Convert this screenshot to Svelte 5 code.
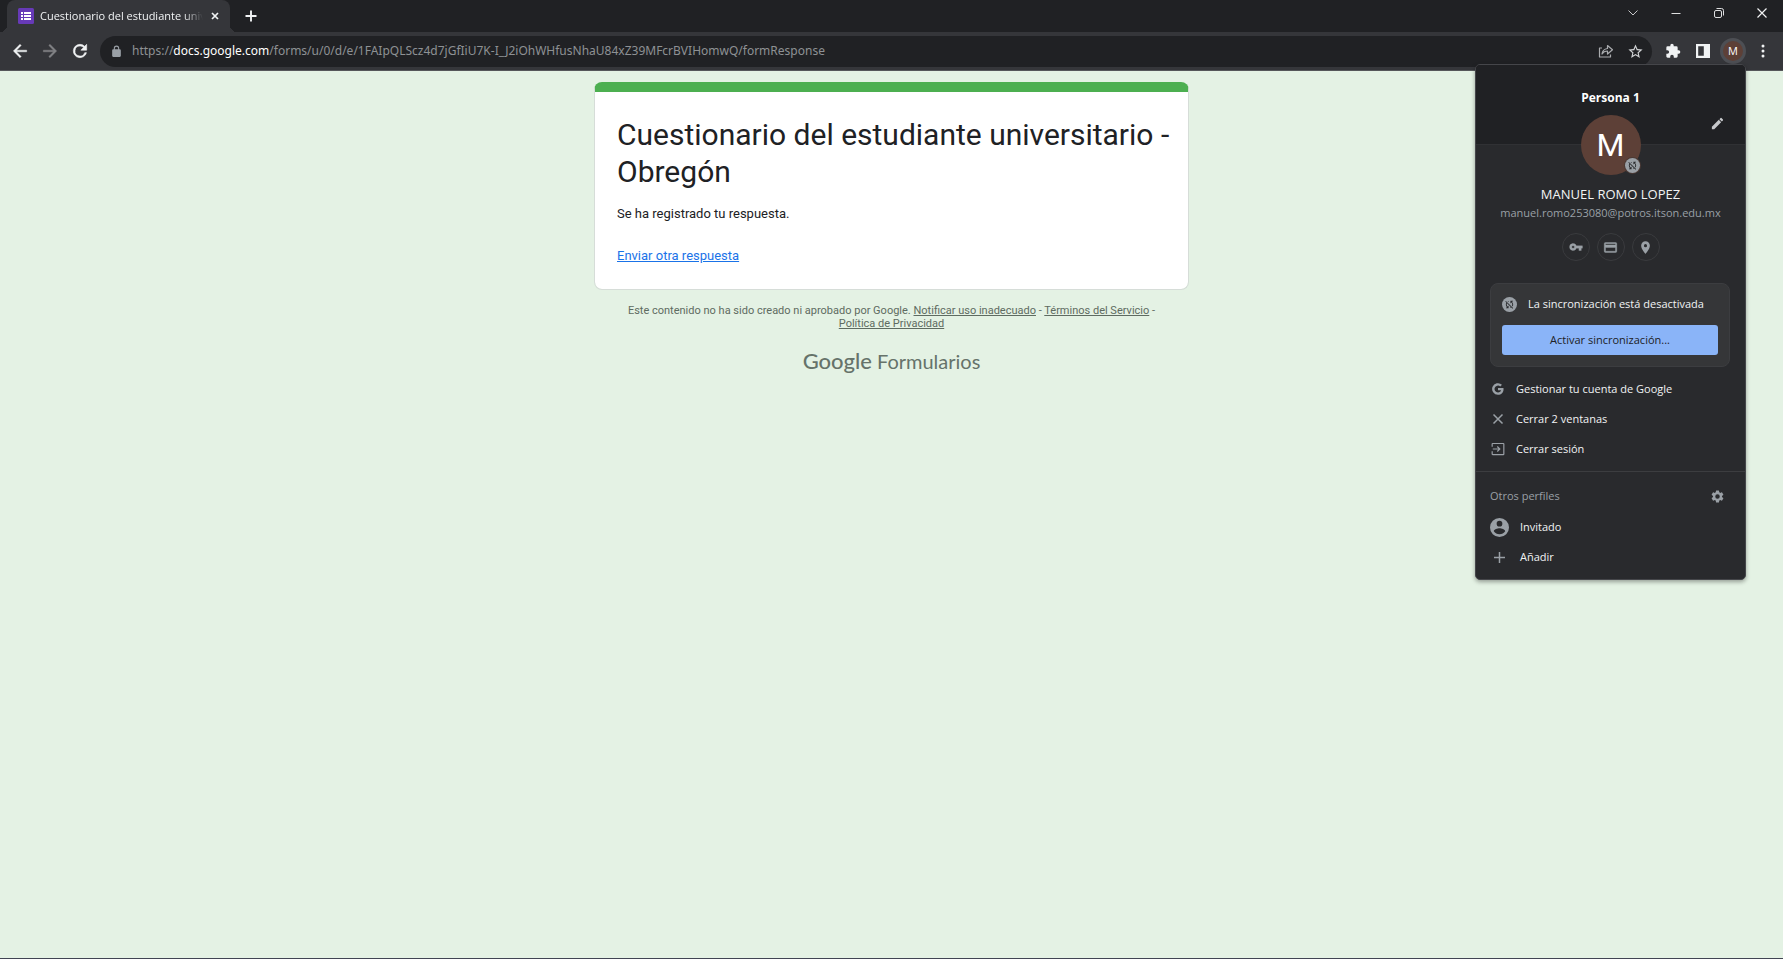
<script>
  const origin = 'docs.google.com';
  const path = '/forms/u/0/d/e/1FAIpQLScz4d7jGfIiU7K-I_J2iOhWHfusNhaU84xZ39MFcrBVIHomwQ/formResponse';
  let editing = $state(false);
  let address = $state('');

  function startEditing() {
    address = `https://${origin}${path}`;
    editing = true;
  }
  function stopEditing() {
    address = '';
    editing = false;
  }
</script>

{#snippet syncOff()}
  <svg viewBox="0 0 24 24" width="11" height="11" aria-hidden="true" fill="#292a2d">
    <path d="M10 6.350V4.260c-.8.210-1.550.540-2.230.960l1.460 1.460c.250-.120.500-.240.770-.330zm-7.140-.940l2.360 2.360C4.450 8.990 4 10.440 4 12c0 2.210.910 4.200 2.360 5.640L4 20h6v-6l-2.240 2.240C6.680 15.150 6 13.660 6 12c0-1 .250-1.940.680-2.770l8.080 8.080c-.250.130-.500.250-.770.340v2.090c.800-.210 1.550-.540 2.230-.960l2.360 2.360 1.270-1.270L4.140 4.140 2.860 5.410zM20 4h-6v6l2.240-2.240C17.320 8.850 18 10.340 18 12c0 1-.250 1.940-.680 2.770l1.460 1.460C19.550 15.010 20 13.560 20 12c0-2.210-.910-4.200-2.360-5.640L20 4z" />
  </svg>
{/snippet}

<div class="browser">
  <header>
    <div class="tabstrip">
      <div class="tab">
        <svg class="favicon" viewBox="0 0 16 16" width="16" height="16" aria-hidden="true">
          <rect width="16" height="16" rx="1.500" fill="#673ab7" />
          <path d="M3 4h2v2H3zM6 4h7v2H6zM3 7h2v2H3zM6 7h7v2H6zM3 10h2v2H3zM6 10h7v2H6z" fill="#fff" />
        </svg>
        <span class="tab-title">Cuestionario del estudiante universitario</span>
        <button class="icon" aria-label="Cerrar pestaña">
          <svg viewBox="0 0 16 16" width="16" height="16"><path d="M5 5l6 6M11 5l-6 6" stroke="#f1f3f4" stroke-width="1.700" /></svg>
        </button>
      </div>
      <button class="icon new-tab" aria-label="Nueva pestaña">
        <svg viewBox="0 0 16 16" width="16" height="16"><path d="M8 2.500v11M2.500 8h11" stroke="#f1f3f4" stroke-width="1.900" /></svg>
      </button>
      <div class="window-controls">
        <button class="icon" aria-label="Buscar pestañas">
          <svg viewBox="0 0 16 16" width="16" height="16" fill="none" stroke="#c8c9cb"><path d="M3.500 5.500L8 10l4.500-4.500" /></svg>
        </button>
        <button class="icon" aria-label="Minimizar">
          <svg viewBox="0 0 16 16" width="16" height="16" fill="none" stroke="#dedfe0"><path d="M3.500 8.500h9" /></svg>
        </button>
        <button class="icon" aria-label="Restaurar">
          <svg viewBox="0 0 16 16" width="16" height="16" fill="none" stroke="#dedfe0"><rect x="3.500" y="5.500" width="7" height="7" rx="1.500" /><path d="M5.500 3.500h5a2 2 0 0 1 2 2v5" /></svg>
        </button>
        <button class="icon" aria-label="Cerrar">
          <svg viewBox="0 0 16 16" width="16" height="16" fill="none" stroke="#f1f3f4" stroke-width="1.200"><path d="M3.500 3.500l9 9M12.500 3.500l-9 9" /></svg>
        </button>
      </div>
    </div>

    <div class="toolbar">
      <div class="navigation">
        <button class="icon" aria-label="Atrás">
          <svg viewBox="0 0 24 24" width="20" height="20" fill="#f1f3f4" stroke="#f1f3f4" stroke-width=".5"><path d="M20 11H7.830l5.590-5.590L12 4l-8 8 8 8 1.410-1.410L7.830 13H20z" /></svg>
        </button>
        <button class="icon" aria-label="Adelante" disabled>
          <svg viewBox="0 0 24 24" width="20" height="20" fill="#828386" stroke="#828386" stroke-width=".5"><path d="M4 11h12.170l-5.590-5.590L12 4l8 8-8 8-1.410-1.410L16.170 13H4z" /></svg>
        </button>
        <button class="icon" aria-label="Volver a cargar">
          <svg viewBox="0 0 24 24" width="20" height="20" fill="#f1f3f4" stroke="#f1f3f4" stroke-width=".7"><path d="M17.650 6.350A7.960 7.960 0 0 0 12 4a8 8 0 1 0 7.730 10h-2.080A6 6 0 1 1 12 6c1.660 0 3.140.690 4.220 1.780L13 11h7V4z" /></svg>
        </button>
      </div>
      <div class="omnibox">
        <svg class="lock" viewBox="0 0 24 24" width="13" height="13" fill="#9aa0a6" aria-hidden="true"><path d="M18 8h-1V6A5 5 0 0 0 7 6v2H6a2 2 0 0 0-2 2v10c0 1.100.900 2 2 2h12a2 2 0 0 0 2-2V10a2 2 0 0 0-2-2zM9 8V6a3 3 0 0 1 6 0v2z" /></svg>
        <div class="address">
          <input type="text" aria-label="Barra de direcciones" bind:value={address} onfocus={startEditing} onblur={stopEditing} />
          {#if !editing}
            <div class="url">https://<b>{origin}</b>{path}</div>
          {/if}
        </div>
        <button class="icon" aria-label="Compartir">
          <svg viewBox="0 0 16 16" width="16" height="16" fill="none" stroke="#a9abae" stroke-width="1.200" stroke-linejoin="round"><path d="M4 5H1.500v9h11v-2.500M9.500 5.500V2.500L14.500 6.700 9.500 11V8C7 8 5.300 8.800 4 11c.3-3 2-5 5.500-5.500z" /></svg>
        </button>
        <button class="icon" aria-label="Añadir a marcadores">
          <svg viewBox="0 0 24 24" width="17" height="17" fill="#d2d4d6"><path d="M22 9.240l-7.190-.620L12 2 9.190 8.630 2 9.240l5.460 4.730L5.820 21 12 17.270 18.180 21l-1.630-7.030zM12 15.400l-3.760 2.270 1-4.280-3.320-2.880 4.380-.380L12 6.100l1.710 4.040 4.380.380-3.320 2.880 1 4.280z" /></svg>
        </button>
      </div>
      <div class="actions">
        <button class="icon" aria-label="Extensiones">
          <svg viewBox="0 0 24 24" width="16" height="16" fill="#f1f3f4"><path d="M20.500 11H19V7a2 2 0 0 0-2-2h-4V3.500a2.500 2.500 0 0 0-5 0V5H4a2 2 0 0 0-2 2v3.800h1.500a2.700 2.700 0 0 1 0 5.400H2V20c0 1.100.900 2 2 2h3.800v-1.500a2.700 2.700 0 0 1 5.400 0V22H17a2 2 0 0 0 2-2v-4h1.500a2.500 2.500 0 0 0 0-5z" /></svg>
        </button>
        <button class="icon" aria-label="Panel lateral">
          <svg viewBox="0 0 16 16" width="16" height="16"><path d="M1 1h14v14H1zM3.200 3.200v9.600h5.600V3.200z" fill="#f1f3f4" fill-rule="evenodd" /></svg>
        </button>
        <button class="profile" aria-label="Persona 1">M</button>
        <button class="icon" aria-label="Menú">
          <svg viewBox="0 0 16 16" width="16" height="16" fill="#f1f3f4"><circle cx="8" cy="3" r="1.500" /><circle cx="8" cy="8" r="1.500" /><circle cx="8" cy="13" r="1.500" /></svg>
        </button>
      </div>
    </div>
  </header>

  <main>
    <section class="card">
      <h1>Cuestionario del estudiante universitario - Obregón</h1>
      <p>Se ha registrado tu respuesta.</p>
      <a href="#otra">Enviar otra respuesta</a>
    </section>
    <footer>
      <p class="legal">
        Este contenido no ha sido creado ni aprobado por Google. <a href="#uso">Notificar uso inadecuado</a> - <a href="#terminos">Términos del Servicio</a> - <a href="#privacidad">Política de Privacidad</a>
      </p>
      <a class="brand" href="#formularios"><b>Google</b> <span>Formularios</span></a>
    </footer>
  </main>

  <aside class="profile-menu" aria-label="Perfil">
    <div class="banner">
      <h2>Persona 1</h2>
      <button class="icon edit" aria-label="Personalizar perfil">
        <svg viewBox="0 0 24 24" width="15" height="15" fill="#c6c8cb"><path d="M3 17.250V21h3.750L17.810 9.940l-3.750-3.750zM20.710 7.040a1 1 0 0 0 0-1.410l-2.340-2.340a1 1 0 0 0-1.410 0l-1.830 1.830 3.750 3.750z" /></svg>
      </button>
    </div>
    <div class="identity">
      <div class="avatar">M<span class="badge sync">{@render syncOff()}</span></div>
      <strong>MANUEL ROMO LOPEZ</strong>
      <span class="email">manuel.romo253080@potros.itson.edu.mx</span>
      <div class="shortcuts">
        <button aria-label="Contraseñas">
          <svg viewBox="0 0 24 24" width="14" height="14" fill="#9aa0a6" stroke="#9aa0a6" stroke-width=".6"><path d="M12.650 10A6 6 0 0 0 1 12a6 6 0 0 0 11.650 2H17v4h4v-4h2v-4zM7 14.300a2.300 2.300 0 1 1 0-4.600 2.300 2.300 0 0 1 0 4.600z" /></svg>
        </button>
        <button aria-label="Métodos de pago">
          <svg viewBox="0 0 24 24" width="15" height="15" fill="#9aa0a6" stroke="#9aa0a6" stroke-width=".6"><path d="M20 4H4a2 2 0 0 0-2 2v12c0 1.100.900 2 2 2h16a2 2 0 0 0 2-2V6a2 2 0 0 0-2-2zm0 14H4v-6h16zm0-10H4V6h16z" /></svg>
        </button>
        <button aria-label="Direcciones">
          <svg viewBox="0 0 24 24" width="15" height="15" fill="#9aa0a6"><path d="M12 2a7 7 0 0 0-7 7c0 5.250 7 13 7 13s7-7.750 7-13a7 7 0 0 0-7-7zm0 9.500a2.500 2.500 0 1 1 0-5 2.500 2.500 0 0 1 0 5z" /></svg>
        </button>
      </div>
    </div>
    <div class="sync-card">
      <div class="sync-status"><span class="sync">{@render syncOff()}</span>La sincronización está desactivada</div>
      <button class="activate">Activar sincronización...</button>
    </div>
    <div class="menu-list">
      <button>
        <svg viewBox="0 0 24 24" width="14" height="14" fill="#9aa0a6"><path d="M21.300 10.200H12v4h5.300c-.600 2.200-2.600 3.700-5.300 3.700a5.900 5.900 0 1 1 3.900-10.300l2.900-2.900A10 10 0 1 0 12 22c5.600 0 9.500-4 9.500-9.700 0-.700-.100-1.400-.200-2.100z" /></svg>
        Gestionar tu cuenta de Google
      </button>
      <button>
        <svg viewBox="0 0 14 14" width="14" height="14" stroke="#9aa0a6" stroke-width="1.500"><path d="M2.500 2.500l9 9M11.500 2.500l-9 9" /></svg>
        Cerrar 2 ventanas
      </button>
      <button>
        <svg viewBox="0 0 24 24" width="14" height="14" fill="#9aa0a6"><path d="M10.090 15.590L11.500 17l5-5-5-5-1.410 1.410L12.670 11H3v2h9.670zM21 1.500H3a2 2 0 0 0-2 2V8h2V3.500h18v17H3V16H1v4.500c0 1.100.900 2 2 2h18a2 2 0 0 0 2-2v-17a2 2 0 0 0-2-2z" /></svg>
        Cerrar sesión
      </button>
    </div>
    <div class="others">
      <div class="others-title">
        <span>Otros perfiles</span>
        <button class="icon" aria-label="Gestionar perfiles">
          <svg viewBox="0 0 24 24" width="15" height="15" fill="#9aa0a6"><path d="M19.140 12.940a7 7 0 0 0 0-1.880l2.030-1.580a.5.5 0 0 0 .120-.610l-1.920-3.320a.5.5 0 0 0-.590-.220l-2.390.960a7 7 0 0 0-1.620-.940l-.360-2.540A.5.5 0 0 0 13.930 2.400h-3.840a.5.5 0 0 0-.480.410l-.360 2.540a7 7 0 0 0-1.620.940l-2.390-.960a.5.5 0 0 0-.590.220L2.740 8.870a.5.5 0 0 0 .120.610l2.030 1.580a7 7 0 0 0 0 1.880l-2.030 1.580a.5.5 0 0 0-.120.610l1.920 3.320c.120.220.370.290.590.220l2.390-.960c.5.380 1.030.700 1.620.940l.360 2.540c.050.240.240.410.480.410h3.840a.5.5 0 0 0 .470-.410l.360-2.540a7 7 0 0 0 1.620-.940l2.390.960c.220.080.470 0 .590-.220l1.920-3.320a.5.5 0 0 0-.120-.610zM12 15.600a3.600 3.600 0 1 1 0-7.200 3.600 3.600 0 0 1 0 7.200z" /></svg>
        </button>
      </div>
      <button>
        <svg viewBox="2 2 20 20" width="19" height="19" fill="#9aa0a6"><path d="M12 2a10 10 0 1 0 0 20 10 10 0 0 0 0-20zm0 3a3 3 0 1 1 0 6 3 3 0 0 1 0-6zm0 14.200a7.200 7.200 0 0 1-6-3.220c.030-1.990 4-3.080 6-3.080s5.970 1.090 6 3.080a7.200 7.200 0 0 1-6 3.220z" /></svg>
        Invitado
      </button>
      <button>
        <svg viewBox="0 0 19 19" width="19" height="19" stroke="#9aa0a6" stroke-width="1.500"><path d="M9.500 4v11M4 9.500h11" /></svg>
        Añadir
      </button>
    </div>
  </aside>
</div>

<style>
  :global(body) { margin: 0; background: #e4f2e4; }
  .browser {
    position: relative;
    box-sizing: border-box;
    min-height: 100vh;
    border-bottom: 1px solid #414553;
    background: #e4f2e4;
    font-family: "Open Sans", "Noto Sans", sans-serif;
    font-size: 11px;
    line-height: 16px;
    color: #f1f3f4;
  }
  button { font: inherit; color: inherit; background: none; border: 0; padding: 0; margin: 0; }
  svg { display: block; flex: none; }
  h1, h2, p { margin: 0; }
  .icon { display: grid; place-items: center; flex: none; }

  .tabstrip { display: flex; align-items: center; height: 32px; padding-left: 7px; background: #202124; }
  .tab {
    position: relative;
    display: flex;
    align-items: center;
    box-sizing: border-box;
    width: 223px;
    height: 32px;
    padding: 0 7px 0 11px;
    border-radius: 8px 8px 0 0;
    background: #35363a;
  }
  .tab::before, .tab::after {
    content: "";
    position: absolute;
    bottom: 0;
    width: 7px;
    height: 7px;
  }
  .tab::before { left: -7px; background: radial-gradient(circle at 0 0, #202124 7px, #35363a 7px); }
  .tab::after { right: -7px; background: radial-gradient(circle at 100% 0, #202124 7px, #35363a 7px); }
  .tab-title {
    flex: 1;
    min-width: 0;
    margin: 0 4px 0 6px;
    overflow: hidden;
    white-space: nowrap;
    mask-image: linear-gradient(to right, #000 88%, transparent);
  }
  .new-tab { margin-left: 13px; }
  .window-controls { display: flex; gap: 27px; margin-left: auto; padding: 0 13px 6px 0; }

  .toolbar {
    display: flex;
    align-items: center;
    height: 38px;
    gap: 10px;
    padding: 0 12px 0 10px;
    border-bottom: 1px solid #55575a;
    background: #35363a;
  }
  .navigation { display: flex; gap: 10px; }
  .omnibox {
    display: flex;
    flex: 1;
    align-items: center;
    min-width: 0;
    height: 31px;
    box-sizing: border-box;
    padding: 0 8px 0 10px;
    border-radius: 16px;
    background: #202124;
  }
  .address { position: relative; flex: 1; min-width: 0; margin: 0 12px 0 9px; font-family: "Noto Sans", sans-serif; font-size: 12px; line-height: 20px; }
  .address input {
    display: block;
    width: 100%;
    height: 20px;
    padding: 0;
    border: 0;
    outline: 0;
    background: none;
    color: #e8eaed;
    font: inherit;
  }
  .url { position: absolute; inset: 0; overflow: hidden; white-space: nowrap; pointer-events: none; color: #8e9194; }
  .url b { font-weight: 400; color: #fff; }
  .omnibox .icon + .icon { margin-left: 13px; }
  .actions { display: flex; align-items: center; gap: 9px; margin-left: 2px; }
  .actions .icon { width: 17px; height: 17px; }
  .actions .icon:first-child { margin-right: 4px; }
  .profile {
    width: 26px;
    height: 26px;
    border: 3px solid #4d4f54;
    border-radius: 50%;
    background: #5d4037;
    font-size: 11px;
    line-height: 20px;
    color: #fff;
  }
  .actions .profile + .icon { margin-left: -1px; }

  main { padding: 11px 0 24px; font-family: Roboto, sans-serif; }
  .card {
    box-sizing: border-box;
    max-width: 595px;
    margin: 0 auto;
    padding: 24px 12px 24px 22px;
    border: 1px solid #d6ddd8;
    border-top: 10px solid #4caf50;
    border-radius: 8px;
    background: linear-gradient(#fff, #fff) padding-box;
    color: #202124;
    font-size: 13px;
    line-height: 18px;
  }
  h1 { font-size: 30px; line-height: 37px; font-weight: 400; }
  .card p { margin: 15px 0 24px; }
  .card a { color: #1a73e8; }
  footer { display: flex; flex-direction: column; align-items: center; color: #5e6b61; }
  .legal { max-width: 550px; margin-top: 14px; text-align: center; font-size: 11px; line-height: 13px; }
  .legal a { color: inherit; }
  .brand {
    display: flex;
    align-items: baseline;
    gap: 5px;
    margin-top: 17px;
    color: #66736a;
    font-family: Lato, sans-serif;
    font-size: 20px;
    line-height: 28px;
    text-decoration: none;
  }
  .brand b { font-size: 22px; font-weight: 500; }

  .profile-menu {
    position: absolute;
    top: 64px;
    right: 37px;
    box-sizing: border-box;
    width: 271px;
    padding-bottom: 7px;
    overflow: hidden;
    border: 1px solid #45464a;
    border-radius: 5px;
    background: #292a2d;
    box-shadow: 0 2px 4px rgb(0 0 0 / 35%);
  }
  .banner { position: relative; height: 79px; background: #202124; border-bottom: 1px solid #303134; }
  h2 { padding-top: 25px; text-align: center; font-size: 12px; line-height: 16px; font-weight: 700; color: #fff; }
  .edit { position: absolute; right: 20px; bottom: 13px; }
  .identity { display: flex; flex-direction: column; align-items: center; margin-top: -30px; }
  .avatar {
    position: relative;
    width: 60px;
    height: 60px;
    border-radius: 50%;
    background: #5d4037;
    color: #fff;
    font-family: Roboto, sans-serif;
    font-size: 32px;
    line-height: 60px;
    text-align: center;
  }
  .sync { display: grid; place-items: center; flex: none; width: 15px; height: 15px; border-radius: 50%; background: #9aa0a6; }
  .badge { position: absolute; right: 1px; bottom: 2px; box-shadow: 0 0 0 1px #4b3a35; }
  strong { margin-top: 9px; font-size: 13px; line-height: 20px; font-weight: 400; color: #f1f3f4; }
  .email { color: #9aa0a6; line-height: 18px; }
  .shortcuts { display: flex; gap: 7px; margin-top: 11px; }
  .shortcuts button { display: grid; place-items: center; width: 28px; height: 28px; border: 1px solid #3a3b3e; border-radius: 50%; box-sizing: border-box; }
  .sync-card { margin: 22px 15px 7px 14px; padding: 12px 11px 11px; border: 1px solid #3c3d40; border-radius: 8px; background: #353638; }
  .sync-status { display: flex; align-items: center; gap: 11px; }
  .activate { display: block; width: 100%; height: 30px; margin-top: 13px; border-radius: 3px; background: #8ab4f8; color: #202124; font-weight: 500; }
  .menu-list { padding-bottom: 7px; border-bottom: 1px solid #3c3d40; }
  .menu-list button, .others > button { display: flex; align-items: center; width: 100%; height: 30px; text-align: left; }
  .menu-list button { gap: 11px; padding-left: 15px; }
  .others { padding-top: 8px; }
  .others > button { gap: 11px; padding-left: 14px; }
  .others-title { display: flex; align-items: center; justify-content: space-between; height: 32px; padding: 0 20px 0 14px; color: #9aa0a6; }
</style>
